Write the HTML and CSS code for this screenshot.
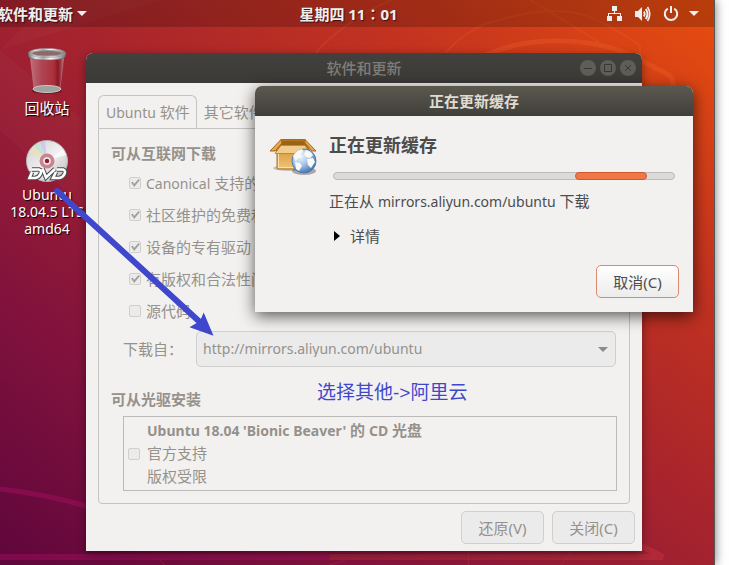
FILE: index.html
```html
<!DOCTYPE html>
<html lang="zh-CN">
<head>
<meta charset="utf-8">
<title>软件和更新</title>
<link rel="stylesheet" href="styles.css">
</head>
<body>
<main class="desktop">
  <svg class="wallpaper" viewBox="0 0 715 565" preserveAspectRatio="none" aria-hidden="true">
    <g fill="none" stroke="#ff7a30" stroke-opacity=".2">
      <path stroke-width="5" d="M486 55C530 36 590 36 634 56L668 74Q674 77 674 84V100"/>
      <path stroke-width="2" stroke-opacity=".14" d="M316 53Q345 20 400 -4M446 53Q470 26 500 20Q560 2 598 20Q632 38 641 46V60M528 -2L600 42"/>
    </g>
    <g fill="#fff" fill-opacity=".025">
      <path d="M0 50L130 160L86 210L0 130Z"/>
      <path d="M0 50L50 0H160Z"/>
    </g>
    <path fill="none" stroke="#b0106a" stroke-opacity=".4" stroke-width="5" d="M0 489Q45 494 90 507"/>
    <path fill="none" stroke="#c01470" stroke-opacity=".3" stroke-width="6" d="M0 557H330"/>
    <path fill="none" stroke="#d8404a" stroke-opacity=".3" stroke-width="6" d="M330 557H664L640 545"/>
    <path fill="none" stroke="#e04040" stroke-opacity=".25" d="M160 560L165 565M330 565L346 560M469 551V565M562 565L572 552"/>
  </svg>

  <header class="topbar">
    <button class="topbar-item app-menu" type="button">软件和更新 <span class="caret"></span></button>
    <time class="topbar-item">星期四 11∶01</time>
    <div class="topbar-item tray">
      <svg width="16" height="16" viewBox="0 0 16 16" aria-label="网络"><path fill="#eee" d="M5 0h5v5H8v2h6v3h1v5h-5v-5h3V8H2v2h3v5H0v-5h1V7h6V5H5z"/></svg>
      <svg width="16" height="16" viewBox="0 0 16 16" aria-label="音量"><path fill="#eee" d="M0 5h3l4-4v14l-4-4H0z"/><path fill="none" stroke="#eee" stroke-width="2" d="M9 5.500q1.500 2.500 0 5M10.800 3q3.400 5 0 10"/><path fill="none" stroke="#eee" stroke-width="1.600" d="M12.500 1q4.500 7 0 14"/></svg>
      <svg width="16" height="16" viewBox="0 0 16 16" aria-label="电源"><path fill="none" stroke="#eee" stroke-width="2" d="M4.800 2.600a6.200 6.200 0 1 0 6.400 0M8 0v7"/></svg>
      <span class="caret"></span>
    </div>
  </header>

  <nav class="shortcuts">
    <a class="shortcut" href="#trash">
      <svg width="38" height="49" viewBox="0 0 38 49" aria-hidden="true">
        <defs>
          <linearGradient id="glass"><stop stop-color="#fff" stop-opacity=".35"/><stop offset=".35" stop-color="#fff" stop-opacity=".16"/><stop offset=".7" stop-color="#d66" stop-opacity=".2"/><stop offset=".82" stop-color="#400" stop-opacity=".25"/><stop offset="1" stop-color="#fff" stop-opacity=".4"/></linearGradient>
          <linearGradient id="rim"><stop stop-color="#777"/><stop offset=".2" stop-color="#eee"/><stop offset=".4" stop-color="#aaa"/><stop offset=".6" stop-color="#fff"/><stop offset="1" stop-color="#777"/></linearGradient>
        </defs>
        <ellipse cx="19" cy="43" rx="15" ry="3" fill="#200" opacity=".35"/>
        <path d="M2 7h34l-4 34q-13 6-26 0z" fill="url(#glass)" stroke="#dcb0b0" stroke-opacity=".3"/>
        <ellipse cx="19" cy="41" rx="14" ry="3.500" fill="#9fa39e" stroke="#c8c8c4"/>
        <path d="M.500 5v3q1 4 18.500 4t18.500-4V5z" fill="url(#rim)" stroke="#666" stroke-width=".6"/>
        <ellipse cx="19" cy="5" rx="18.500" ry="4.600" fill="url(#rim)" stroke="#999" stroke-width=".6"/>
        <ellipse cx="19" cy="5.300" rx="15" ry="2.800" fill="#8d6a6a" stroke="#999"/>
      </svg>
      <span>回收站</span>
    </a>
    <a class="shortcut shortcut-disc" href="#dvd">
      <svg width="44" height="44" viewBox="0 0 44 44" aria-hidden="true">
        <defs><linearGradient id="disc" x2="1" y2="1"><stop stop-color="#ccc"/><stop offset=".5" stop-color="#f0f0f0"/><stop offset="1" stop-color="#b8b8b8"/></linearGradient></defs>
        <circle cx="22" cy="22" r="20.500" fill="url(#disc)" stroke="#b8b4b4"/>
        <path d="M22 22L4 13L9 7Z" fill="#efe0b8" opacity=".8"/>
        <path d="M22 22L9 7L15 3Z" fill="#bfe3d2" opacity=".8"/>
        <path d="M22 22L15 3L20 2Z" fill="#cfc2ea" opacity=".8"/>
        <path d="M22 22L38 10L41 16Z" fill="#fff" opacity=".7"/>
        <circle cx="22" cy="22" r="6" fill="#d48a95" stroke="#c98490" stroke-width="3"/>
        <circle cx="22" cy="22" r="3" fill="#8e1b36" stroke="#eee" stroke-width="1.500"/>
        <g fill="none">
          <path stroke="#4c4c4c" stroke-width="4.600" d="M7 30.500H14q3 1 1.500 4.500t-5.500 4H4.500L7 33M17.500 29.500L21 38.500L30 30M32 30.500h6q3 1 1.500 4.500t-5.500 4H28L31 33"/>
          <path stroke="#fff" stroke-width="2.600" d="M7 30.500H14q3 1 1.500 4.500t-5.500 4H4.500L7 33M17.500 29.500L21 38.500L30 30M32 30.500h6q3 1 1.500 4.500t-5.500 4H28L31 33"/>
        </g>
      </svg>
      <span>Ubuntu 18.04.5 LTS amd64</span>
    </a>
  </nav>

  <section class="window settings" aria-label="软件和更新">
    <div class="titlebar inactive">
      <h1 class="title">软件和更新</h1>
      <div class="controls">
        <button class="control" type="button" aria-label="最小化"><svg viewBox="0 0 16 16"><path d="M4 8.500h8"/></svg></button>
        <button class="control" type="button" aria-label="最大化"><svg viewBox="0 0 16 16"><path d="M4.500 4.500h7v7h-7z"/></svg></button>
        <button class="control" type="button" aria-label="关闭"><svg viewBox="0 0 16 16"><path d="M5 5l6 6M11 5l-6 6"/></svg></button>
      </div>
    </div>
    <div class="settings-body">
      <div class="tabs" role="tablist">
        <button class="tab active" role="tab" type="button"><span class="latin">Ubuntu</span> 软件</button>
        <button class="tab" role="tab" type="button">其它软件</button>
      </div>
      <div class="panel">
        <h2 class="group-title">可从互联网下载</h2>
        <div class="checks">
          <label class="check"><input type="checkbox" checked disabled><span><span class="latin">Canonical</span> 支持的免费和开源软件</span></label>
          <label class="check"><input type="checkbox" checked disabled><span>社区维护的免费和开源软件</span></label>
          <label class="check"><input type="checkbox" checked disabled><span>设备的专有驱动</span></label>
          <label class="check"><input type="checkbox" checked disabled><span>有版权和合法性问题的软件</span></label>
          <label class="check"><input type="checkbox" disabled><span>源代码</span></label>
        </div>
        <div class="source">
          <label for="server">下载自：</label>
          <div class="combo">
            <select id="server" class="latin" disabled><option>http://mirrors.aliyun.com/ubuntu</option></select>
          </div>
        </div>
        <h2 class="group-title cd-title">可从光驱安装</h2>
        <label class="cd-list">
          <input type="checkbox" disabled>
          <span class="cd-text"><strong><span class="latin">Ubuntu 18.04 'Bionic Beaver'</span> 的 <span class="latin">CD</span> 光盘</strong><span>官方支持</span><span>版权受限</span></span>
        </label>
      </div>
      <div class="actions">
        <button class="button" type="button" disabled>还原(V)</button>
        <button class="button" type="button" disabled>关闭(C)</button>
      </div>
    </div>
  </section>

  <section class="window dialog" role="dialog" aria-label="正在更新缓存">
    <div class="titlebar"><h1 class="title">正在更新缓存</h1></div>
    <div class="dialog-body">
      <svg class="package" width="50" height="42" viewBox="0 0 50 42" aria-hidden="true">
        <defs>
          <linearGradient id="box" x2="0" y2="1"><stop stop-color="#d99b3f"/><stop offset="1" stop-color="#f0c479"/></linearGradient>
          <radialGradient id="globe" cx=".35" cy=".3" r=".8"><stop stop-color="#f3f8fd"/><stop offset=".5" stop-color="#9fc0e4"/><stop offset="1" stop-color="#2f66a8"/></radialGradient>
        </defs>
        <ellipse cx="20" cy="32" rx="16" ry="3" fill="#000" opacity=".2"/>
        <ellipse cx="35" cy="35" rx="12" ry="4" fill="#000" opacity=".3"/>
        <path d="M8 14h30v18q0 1-1 1H9q-1 0-1-1z" fill="url(#box)" stroke="#a9701c"/>
        <path d="M9.500 16v15.500h27" fill="none" stroke="#f8dfae"/>
        <path d="M12 3.500h24l5 12H7z" fill="#b8761c" stroke="#a66a17"/>
        <path d="M14 5h20l4 6H10z" fill="#9b6414"/>
        <path d="M12 3.500L1 15h5l7-8zM36 3.500L47 15h-4l-7-8z" fill="#e3a850" stroke="#a66a17"/>
        <path d="M12 9.500h24l5 8H6z" fill="#f1cd8d" stroke="#c48a36"/>
        <circle cx="35" cy="25" r="12" fill="url(#globe)" stroke="#4e79ad"/>
        <path d="M24 20q3-6 9-7l1 3-3 2 1 3-4 2-1 3zM37 14q5 1 7 5l-3 3-4-1-2-3zM26 26l5 1 2 3-3 5-3-2zM38 23l6-1 2 4-4 6-3-3z" fill="#f8f9f5"/>
      </svg>
      <div class="dialog-content">
        <h2 class="dialog-heading">正在更新缓存</h2>
        <div class="progress" role="progressbar" aria-label="正在更新缓存"><div class="progress-block"></div></div>
        <p class="status">正在从 <span class="latin">mirrors.aliyun.com/ubuntu</span> 下载</p>
        <details class="details"><summary>详情</summary></details>
      </div>
      <div class="dialog-actions"><button class="button primary" type="button">取消(C)</button></div>
    </div>
  </section>

  <p class="note">选择其他-&gt;阿里云</p>
  <svg class="arrow" width="164" height="154" viewBox="0 0 164 154" aria-hidden="true">
    <path d="M7 9L152 142" stroke="#3f48cc" stroke-width="6" stroke-linecap="round"/>
    <path d="M163.500 153.700L139.500 145.300L150 139L153.700 130.500Z" fill="#3f48cc"/>
  </svg>
</main>
</body>
</html>
```

FILE: styles.css
```css
* {
  box-sizing: border-box;
}

body {
  margin: 0;
  background: #fff;
  color: #4c4c4c;
  font: 15px/22px "Noto Sans", "Noto Sans CJK SC", sans-serif;
  overflow: hidden;
}

h1, h2, p {
  margin: 0;
  font-size: 15px;
}

button, select {
  font: inherit;
  color: inherit;
}

/* Latin runs look larger than the Chinese text at the same size */
.latin {
  font-size: 14px;
  line-height: 16px;
}

.desktop {
  position: relative;
  min-height: 100vh;
  margin-right: 14px;
  border-right: 1px solid #555;
  background: linear-gradient(to top right, #5f063c, #83133c 25%, #a3222f 50%, #c3331f 75%, #e84e0e);
  box-shadow: 0 0 10px rgba(0, 0, 0, .55);
}

.wallpaper {
  position: absolute;
  inset: 0;
  width: 100%;
  height: 100%;
}

/* Top bar */
.topbar {
  position: relative;
  display: grid;
  grid-template-columns: 1fr auto 1fr;
  align-items: center;
  height: 27px;
  margin-left: -17px;
  padding: 0 15px;
  background: rgba(0, 0, 0, .2);
  color: #eee;
  font-weight: 700;
  text-shadow: 1px 1px 1px rgba(0, 0, 0, .6);
}

.topbar-item {
  display: flex;
  align-items: center;
  white-space: pre;
}

.app-menu {
  padding: 0;
  border: 0;
  background: none;
  text-shadow: inherit;
  font-weight: 700;
}

.tray {
  justify-content: flex-end;
  gap: 12px;
}

.caret {
  width: 10px;
  height: 5px;
  background: #eee;
  clip-path: polygon(0 0, 100% 0, 50% 100%);
}

.tray .caret {
  margin-left: -2px;
}

/* Desktop shortcuts */
.shortcuts {
  position: relative;
  display: flex;
  flex-direction: column;
  width: 94px;
  gap: 22px;
  padding-top: 21px;
}

.shortcut {
  display: flex;
  flex-direction: column;
  align-items: center;
  gap: 3px;
  padding: 0 6px;
  color: #fff;
  line-height: 17px;
  text-align: center;
  text-decoration: none;
  text-shadow: 1px 1px 1px #000;
}

.shortcut-disc {
  font-size: 14px;
}

/* Windows */
.window {
  position: absolute;
  border-radius: 7px 7px 0 0;
  background: #f2f1f0;
}

.settings {
  top: 53px;
  left: 86px;
  right: 72px;
  color: #96918b;
  box-shadow: 0 3px 10px rgba(0, 0, 0, .4);
}

.dialog {
  top: 86px;
  left: 255px;
  right: 21px;
  box-shadow: 0 4px 16px rgba(0, 0, 0, .65);
}

.titlebar {
  display: grid;
  grid-template-columns: 1fr auto 1fr;
  align-items: center;
  height: 30px;
  padding: 0 6px;
  border-radius: 7px 7px 0 0;
  background: linear-gradient(#5b584f, #403f3a);
  color: #dfdbd2;
}

.titlebar.inactive {
  background: linear-gradient(#42413d, #3b3a37);
  color: #807d78;
}

.title {
  grid-column: 2;
  font-weight: 700;
}

.inactive .title {
  font-weight: 500;
}

.controls {
  display: flex;
  justify-content: flex-end;
  gap: 4px;
}

.control {
  width: 16px;
  height: 16px;
  padding: 0;
  border: 0;
  border-radius: 50%;
  background: #5e5d58;
}

.control svg {
  display: block;
  fill: none;
  stroke: #393834;
}

/* Settings window */
.settings-body {
  padding: 12px 12px 7px;
}

.tabs {
  display: flex;
  height: 33px;
}

.tab {
  padding: 0 6px;
  border: 1px solid transparent;
  border-bottom: 0;
  border-radius: 6px 6px 0 0;
  background: none;
  white-space: nowrap;
}

.tab.active {
  padding-left: 7px;
  border-color: #c4c3c1;
}

.panel {
  padding: 13px 12px 12px;
  border: 1px solid #c4c3c1;
  border-radius: 0 0 4px 4px;
}

.group-title {
  font-weight: 700;
}

.checks {
  padding: 3px 0 4px 18px;
}

.check {
  display: flex;
  align-items: center;
  gap: 5px;
  height: 32px;
  overflow: hidden;
  white-space: nowrap;
}

input[type="checkbox"] {
  flex: none;
  width: 12px;
  height: 12px;
  margin: 0;
  border: 1px solid #d0cfcd;
  border-radius: 2px;
  background: #ebebeb;
  appearance: none;
}

input[type="checkbox"]:checked::before {
  content: "";
  display: block;
  width: 10px;
  height: 10px;
  background: #a5a29e;
  clip-path: polygon(10% 45%, 25% 35%, 42% 58%, 85% 10%, 98% 22%, 42% 90%);
}

.source {
  display: flex;
  align-items: center;
  gap: 13px;
  padding-left: 12px;
}

.combo {
  position: relative;
  flex: 1;
  margin-right: 1px;
}

.combo::after {
  content: "";
  position: absolute;
  top: 16px;
  right: 8px;
  width: 10px;
  height: 5px;
  background: #8f8b86;
  clip-path: polygon(0 0, 100% 0, 50% 100%);
}

.combo select {
  display: block;
  width: 100%;
  height: 36px;
  padding: 0 6px;
  border: 1px solid #d0cfcd;
  border-radius: 5px;
  background: #ebebeb;
  opacity: 1;
  appearance: none;
}

.cd-title {
  padding: 21px 0 6px;
}

.cd-list {
  display: flex;
  align-items: center;
  gap: 7px;
  margin-left: 12px;
  padding: 2px 4px;
  border: 1px solid #bdbbb9;
}

.cd-text {
  display: grid;
  line-height: 23px;
}

.actions {
  display: flex;
  justify-content: flex-end;
  gap: 8px;
  padding-top: 7px;
  margin-right: -5px;
}

.button {
  width: 83px;
  height: 33px;
  padding: 0;
  border: 1px solid #d0cfcd;
  border-radius: 5px;
  background: #ebebeb;
}

.button.primary {
  border-color: #d98a70;
  background: linear-gradient(#fff, #ececeb);
}

/* Progress dialog */
.dialog-body {
  display: grid;
  grid-template-columns: 50px 1fr;
  gap: 18px 10px;
  padding: 16px 14px 14px;
}

.package {
  margin-top: 4px;
}

.dialog-heading {
  font-size: 18px;
  font-weight: 700;
  line-height: 26px;
}

.progress {
  height: 8px;
  margin: 14px 4px 10px;
  border: 1px solid #bcbab8;
  border-radius: 4px;
  background: #dcdbda;
}

.progress-block {
  width: 21%;
  height: 8px;
  margin: -1px 0 0 71%;
  border: 1px solid #cd5a2e;
  border-radius: 4px;
  background: #f07746;
}

.details {
  margin-top: 13px;
}

.details summary {
  display: flex;
  align-items: center;
  gap: 10px;
  padding-left: 5px;
  list-style: none;
}

.details summary::before {
  content: "";
  width: 6px;
  height: 10px;
  background: #000;
  clip-path: polygon(0 0, 100% 50%, 0 100%);
}

.dialog-actions {
  grid-column: 1 / -1;
  display: flex;
  justify-content: flex-end;
}

/* Annotation over the windows */
.note {
  position: absolute;
  top: 380px;
  left: 317px;
  color: #3f48cc;
  font: 19px/26px "Liberation Sans", "Noto Sans CJK SC", sans-serif;
}

.arrow {
  position: absolute;
  top: 182px;
  left: 50px;
}
```
